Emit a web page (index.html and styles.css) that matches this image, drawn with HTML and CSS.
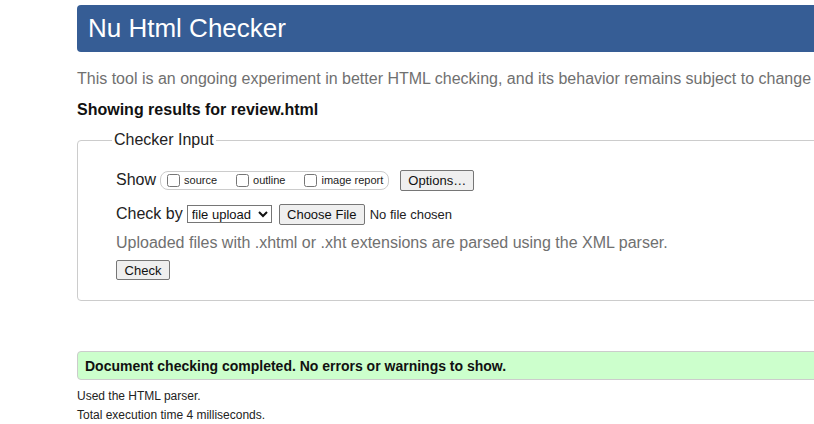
FILE: index.html
```html
<!DOCTYPE html>
<html lang="en">
<head>
<meta charset="utf-8">
<title>Nu Html Checker</title>
<link rel="stylesheet" href="styles.css">
</head>
<body>
<div class="page">
  <h1 class="title">Nu Html Checker</h1>
  <p class="intro">This tool is an ongoing experiment in better HTML checking, and its behavior remains subject to change</p>
  <p class="showing">Showing results for review.html</p>
  <fieldset class="checker">
    <legend class="legend">Checker Input</legend>
    <div class="row row-show">
      <span class="label">Show</span>
      <span class="opts">
        <label class="opt"><input type="checkbox" class="cb"><span>source</span></label>
        <label class="opt"><input type="checkbox" class="cb"><span>outline</span></label>
        <label class="opt"><input type="checkbox" class="cb"><span>image report</span></label>
      </span>
      <button class="btn btn-options" type="button">Options…</button>
    </div>
    <div class="row row-by">
      <span class="label">Check by</span>
      <select class="sel"><option>file upload</option></select>
      <button class="btn btn-file" type="button">Choose File</button>
      <span class="nofile">No file chosen</span>
    </div>
    <p class="note">Uploaded files with .xhtml or .xht extensions are parsed using the XML parser.</p>
    <button class="btn btn-check" type="button">Check</button>
  </fieldset>
  <p class="success">Document checking completed. No errors or warnings to show.</p>
  <p class="meta">Used the HTML parser.</p>
  <p class="meta">Total execution time 4 milliseconds.</p>
</div>
</body>
</html>
```
FILE: styles.css
```css
html, body {
  margin: 0;
  padding: 0;
  background: #fff;
  overflow: hidden;
}
body {
  font-family: "Liberation Sans", Arial, sans-serif;
  color: #222;
}
.page {
  margin-left: 77px;
  width: 1000px;
  padding-top: 5px;
}
.title {
  margin: 0;
  height: 47px;
  line-height: 46px;
  padding-left: 11px;
  background: #365d95;
  color: #fff;
  font-size: 26px;
  font-weight: normal;
  border-radius: 4px;
}
.intro {
  margin: 17px 0 0;
  font-size: 16px;
  line-height: 20px;
  color: #707070;
}
.showing {
  margin: 11px 0 0;
  font-size: 16px;
  line-height: 20px;
  font-weight: bold;
  color: #111;
}
.checker {
  margin: 11px 0 0;
  border: 1px solid #ccc;
  border-radius: 4px;
  padding: 10px 0 20px 38px;
  min-width: 0;
}
.legend {
  margin-left: -4px;
  padding: 0 2px;
  font-size: 16px;
  color: #222;
}
.row {
  display: flex;
  align-items: center;
}
.row-show {
  margin-top: 10px;
  height: 22px;
}
.label {
  font-size: 16px;
  line-height: 20px;
}
.opts {
  display: inline-flex;
  align-items: center;
  margin-left: 4px;
  height: 17px;
  border: 1px solid #ccc;
  border-radius: 8px;
  padding: 0 5px 0 6px;
}
.opt {
  display: inline-flex;
  align-items: center;
  font-size: 11px;
  margin-right: 19px;
}
.opt:last-child {
  margin-right: 0;
}
.cb {
  margin: 0 4px 0 0;
  width: 13px;
  height: 13px;
}
.btn {
  font-family: "Liberation Sans", Arial, sans-serif;
  font-size: 13px;
  color: #111;
  background: #efefef;
  border: 1px solid #767676;
  border-radius: 2px;
  padding: 1px 6px;
  height: 21px;
}
.btn-options {
  margin-left: 11px;
  width: 74px;
}
.row-by {
  margin-top: 12px;
  height: 22px;
}
.sel {
  margin-left: 4px;
  font-family: "Liberation Sans", Arial, sans-serif;
  font-size: 13px;
  height: 18px;
  width: 85px;
  border: 1px solid #767676;
  border-radius: 0;
  padding: 0;
  background: #fff;
  color: #111;
}
.btn-file {
  margin-left: 7px;
  width: 86px;
}
.nofile {
  margin-left: 5px;
  font-size: 13px;
  color: #222;
}
.note {
  margin: 8px 0 0;
  font-size: 16px;
  line-height: 20px;
  color: #707070;
}
.btn-check {
  margin-top: 7px;
  width: 54px;
  height: 20px;
  padding: 0;
}
.success {
  margin: 50px 0 0;
  height: 29px;
  line-height: 28px;
  padding-left: 7px;
  background: #ccffcc;
  border: 1px solid #ccc;
  border-radius: 4px;
  font-size: 14px;
  font-weight: bold;
  color: #111;
  box-sizing: border-box;
}
.meta {
  margin: 8px 0 0;
  font-size: 12px;
  line-height: 16px;
  color: #222;
}
.meta + .meta {
  margin-top: 3px;
}
```
